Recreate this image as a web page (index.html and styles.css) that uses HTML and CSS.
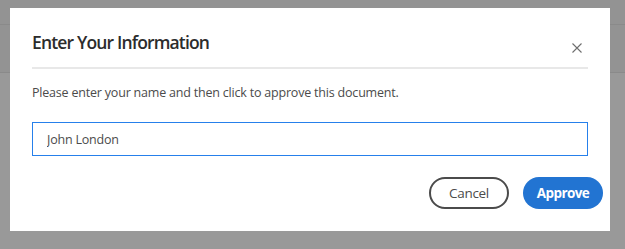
FILE: index.html
```html
<!DOCTYPE html>
<html>
<head>
<meta charset="utf-8">
<link rel="stylesheet" href="styles.css">
</head>
<body>
<div class="app">
  <div class="bar bar-top"></div>
  <div class="bar bar-sub"></div>
  <div class="page"></div>
</div>
<div class="dialog" role="dialog">
  <div class="head">
    <h1 class="title">Enter Your Information</h1>
    <button class="close" aria-label="Close">
      <svg width="10" height="10" viewBox="0 0 10 10"><path d="M0.5 0.5L9.5 9.5M9.5 0.5L0.5 9.5" stroke="#6e6e6e" stroke-width="1.1" fill="none"/></svg>
    </button>
  </div>
  <p class="msg">Please enter your name and then click to approve this document.</p>
  <input class="field" type="text" value="John London">
  <div class="actions">
    <button class="btn btn-cancel">Cancel</button>
    <button class="btn btn-approve">Approve</button>
  </div>
</div>
</body>
</html>
```
FILE: styles.css
```css
html, body {
  margin: 0;
  padding: 0;
}
body {
  width: 625px;
  height: 249px;
  overflow: hidden;
  background: #999999;
  font-family: "Open Sans", "Noto Sans", sans-serif;
  position: relative;
}
.app {
  display: flex;
  flex-direction: column;
}
.bar-top {
  height: 24px;
  background: #939393;
  border-bottom: 1px solid #8a8a8a;
}
.bar-sub {
  height: 47px;
  background: #939393;
  border-bottom: 1px solid #8a8a8a;
}
.dialog {
  position: absolute;
  left: 10px;
  top: 8px;
  width: 600px;
  height: 223px;
  box-sizing: border-box;
  background: #ffffff;
  padding: 0 22px;
  display: flex;
  flex-direction: column;
}
.head {
  display: flex;
  align-items: flex-start;
  justify-content: space-between;
  padding-top: 22px;
  height: 37px;
  border-bottom: 2px solid #e8e8e8;
}
.title {
  margin: 0;
  font-size: 17.5px;
  line-height: 24px;
  font-weight: 600;
  color: #2c2c2c;
  letter-spacing: -0.85px;
}
.close {
  border: 0;
  background: transparent;
  padding: 0;
  width: 10px;
  height: 10px;
  margin-top: 13px;
  margin-right: 6px;
  display: flex;
}
.msg {
  margin: 14px 0 0;
  font-size: 12.5px;
  line-height: 20px;
  color: #4b4b4b;
  letter-spacing: -0.2px;
}
.field {
  margin-top: 19px;
  width: 556px;
  height: 34px;
  box-sizing: border-box;
  border: 1px solid #2680eb;
  border-radius: 0;
  padding: 0 14px;
  font-family: inherit;
  font-size: 12.5px;
  color: #4b4b4b;
  outline: none;
  letter-spacing: -0.2px;
}
.actions {
  display: flex;
  justify-content: flex-end;
  gap: 14px;
  margin-top: 21px;
  margin-right: -15px;
}
.btn {
  width: 80px;
  height: 32px;
  box-sizing: border-box;
  border-radius: 16px;
  font-family: inherit;
  font-size: 13.5px;
  padding: 0;
  cursor: pointer;
  letter-spacing: -0.3px;
}
.btn-cancel {
  background: #ffffff;
  border: 2px solid #4b4b4b;
  color: #4b4b4b;
}
.btn-approve {
  background: #2274d2;
  border: 0;
  color: #ffffff;
  font-weight: 700;
  letter-spacing: -0.6px;
}
```
